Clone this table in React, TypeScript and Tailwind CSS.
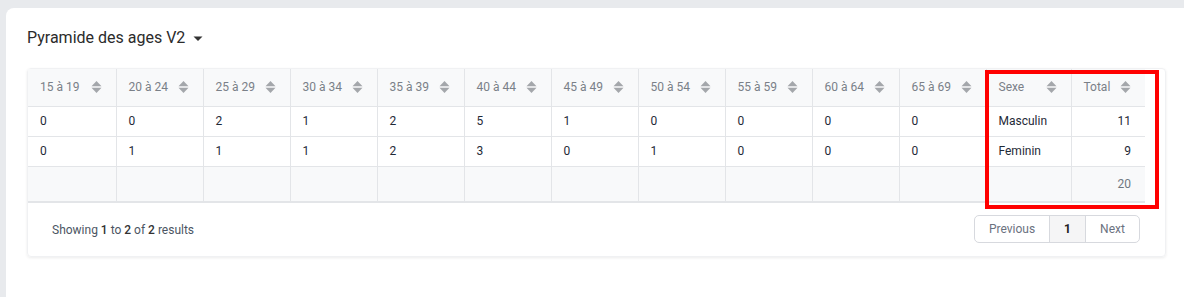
import React from "react";

const cols = ["15 à 19","20 à 24","25 à 29","30 à 34","35 à 39","40 à 44","45 à 49","50 à 54","55 à 59","60 à 64","65 à 69"];
const rows = [
  { v: [0,0,2,1,2,5,1,0,0,0,0], sexe: "Masculin", total: 11 },
  { v: [0,1,1,1,2,3,0,1,0,0,0], sexe: "Feminin", total: 9 },
];

function SortIcon() {
  return (
    <svg width="11" height="14" viewBox="0 0 11 14" className="shrink-0 block">
      <path d="M0.5 6.2 L5.5 1 L10.5 6.2 Z" fill="#a4a7ab" />
      <path d="M0.5 7.8 L5.5 13 L10.5 7.8 Z" fill="#a4a7ab" />
    </svg>
  );
}

export default function App() {
  return (
    <div className="w-[1184px] h-[297px] bg-[#e8eaed] pt-[8px] pl-[6px] overflow-hidden" style={{ fontFamily: "Roboto, 'Liberation Sans', sans-serif" }}>
      <div className="bg-white rounded-tl-[8px] h-[289px] pl-[21px] pt-[20px] relative">
        <div className="flex items-center h-[20px] text-[16px] text-[#2b2b2b]">
          <span>Pyramide des ages V2</span>
          <svg width="10" height="6" viewBox="0 0 10 6" className="ml-[8px] mt-[1px]"><path d="M0.5 0.5 L9.5 0.5 L5 5 Z" fill="#333" /></svg>
        </div>
        <div className="mt-[20px] w-[1139px] rounded-[4px] shadow-[0_1px_3px_rgba(0,0,0,0.08)] border border-[#f0f1f3]">
          <table className="border-collapse text-[12px] table-fixed w-[1117px]">
            <colgroup>
              {cols.map((c, i) => <col key={c} className={i === 0 ? "w-[88px]" : "w-[87px]"} />)}
              <col className="w-[85px]" />
              <col className="w-[74px]" />
            </colgroup>
            <thead>
              <tr className="bg-[#f8f9fa] h-[37px] border-b border-[#e3e5e8]">
                {[...cols, "Sexe", "Total"].map((c, i) => (
                  <th key={c} className={"font-normal text-left text-[#7a8088] px-[12px] " + (i < 12 ? "border-r border-[#e3e5e8]" : "")}>
                    <div className="flex items-center justify-between pr-[2px]">
                      <span>{c}</span>
                      <SortIcon />
                    </div>
                  </th>
                ))}
              </tr>
            </thead>
            <tbody>
              {rows.map((r, ri) => (
                <tr key={ri} className="h-[30px] border-b border-[#e3e5e8] bg-white">
                  {r.v.map((x, i) => (
                    <td key={i} className="px-[12px] text-[#1f2a37] border-r border-[#e3e5e8]">{x}</td>
                  ))}
                  <td className="px-[12px] text-[#1f2a37] border-r border-[#e3e5e8]">{r.sexe}</td>
                  <td className="px-[12px] text-right text-[#1f2a37] pr-[14px]">{r.total}</td>
                </tr>
              ))}
              <tr className="h-[36px] bg-[#f8f9fa] border-b-2 border-[#e3e5e8]">
                {cols.map((c) => <td key={c} className="border-r border-[#e3e5e8]" />)}
                <td className="border-r border-[#e3e5e8]" />
                <td className="px-[12px] pr-[14px] text-right text-[#6f7780]">20</td>
              </tr>
            </tbody>
          </table>
          <div className="flex items-center justify-between h-[53px] pl-[24px] pr-[25px] pb-[1px]">
            <div className="text-[12px] text-[#4b5563] mt-[1px]">
              Showing <span className="font-medium text-[#333]">1</span> to <span className="font-medium text-[#333]">2</span> of <span className="font-medium text-[#333]">2</span> results
            </div>
            <div className="flex h-[28px] text-[12px] border border-[#d7d9de] rounded-[5px] overflow-hidden">
              <div className="w-[75px] flex items-center justify-center text-[#6b7280] border-r border-[#d7d9de]">Previous</div>
              <div className="w-[36px] flex items-center justify-center bg-[#f5f5f6] font-bold text-[#222] border-r border-[#d7d9de]">1</div>
              <div className="w-[53px] flex items-center justify-center text-[#6b7280]">Next</div>
            </div>
          </div>
        </div>
        <div className="absolute left-[979px] top-[62px] w-[174px] h-[139px] border-[4px] border-[#ff0000]" />
      </div>
    </div>
  );
}
